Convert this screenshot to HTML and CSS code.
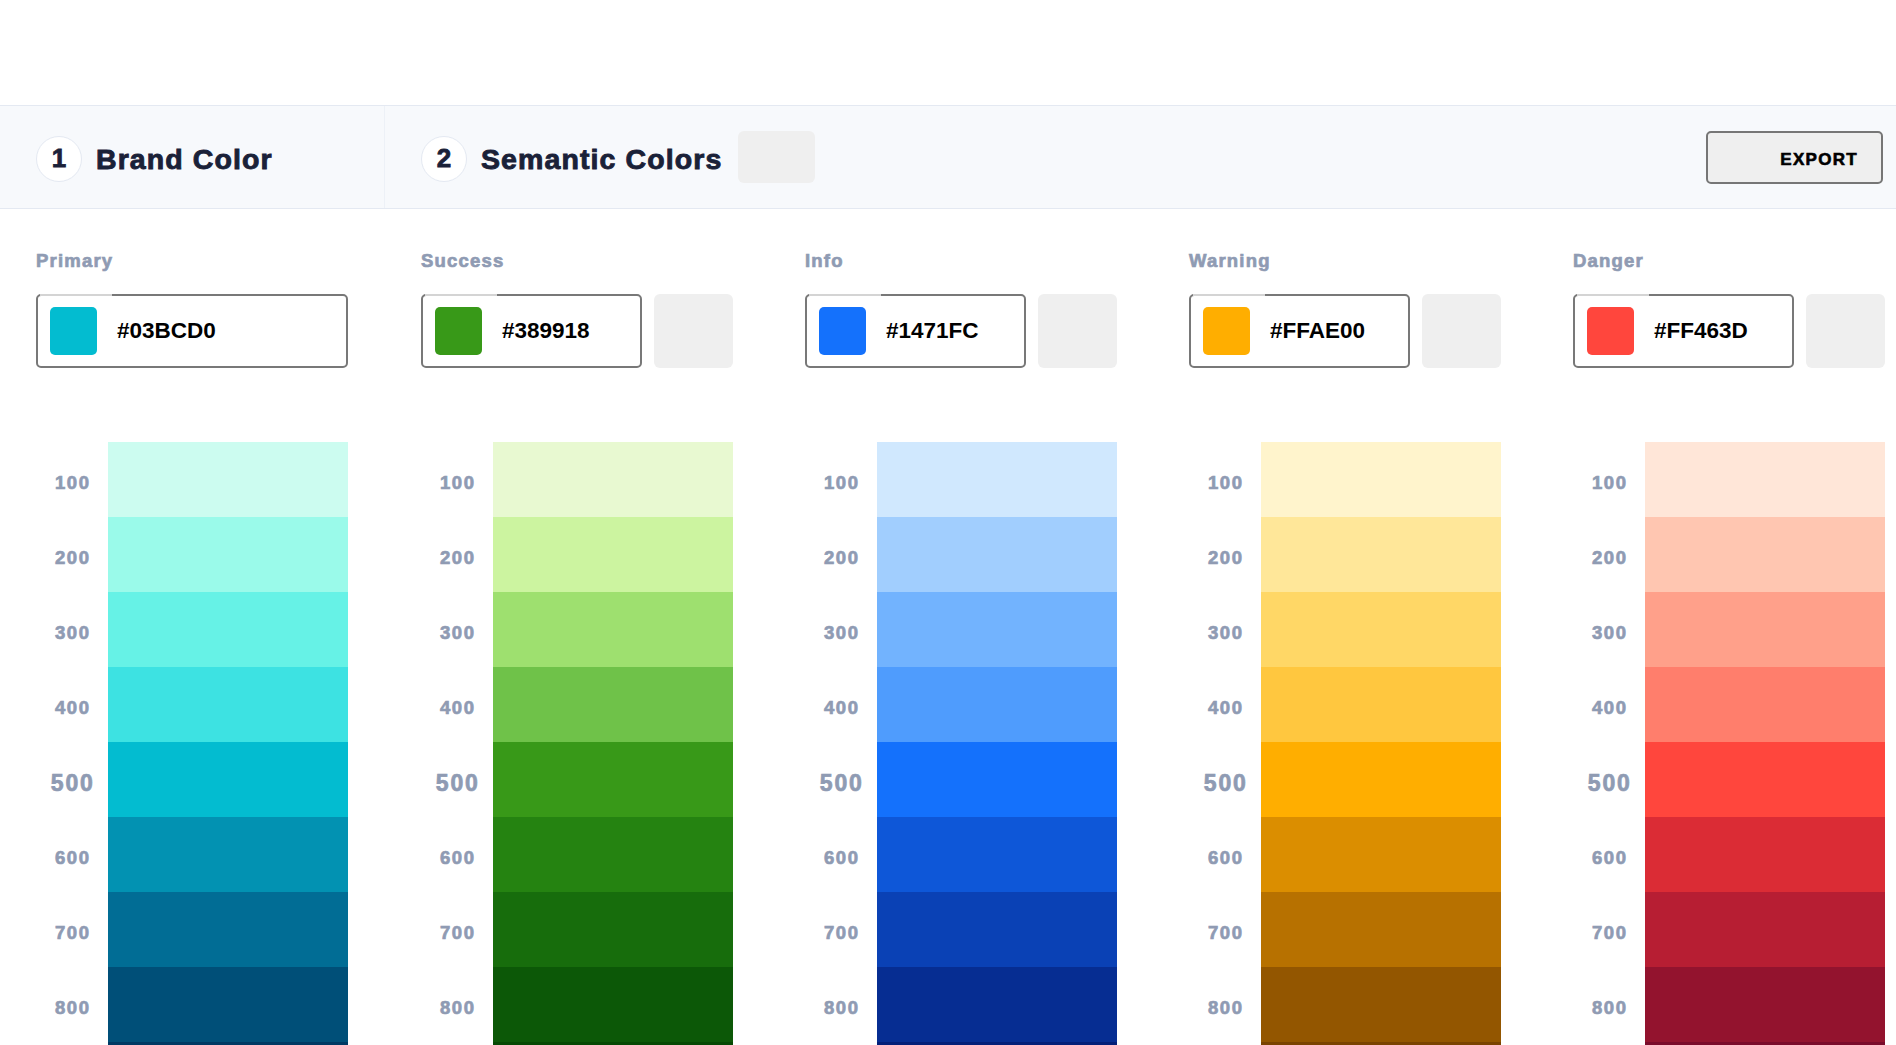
FILE: index.html
```html
<!DOCTYPE html>
<html lang="en">
<head>
<meta charset="utf-8">
<title>Eva Colors</title>
<link rel="stylesheet" href="styles.css">
</head>
<body>
<div class="page">
  <header class="steps">
    <div class="step step-brand">
      <span class="step-num">1</span>
      <h2 class="step-title">Brand Color</h2>
    </div>
    <div class="step step-semantic">
      <span class="step-num">2</span>
      <h2 class="step-title">Semantic Colors</h2>
      <button class="ghost ghost-head" type="button"></button>
      <span class="spacer"></span>
      <button class="export" type="button">EXPORT</button>
    </div>
  </header>

  <main class="palettes">
    <section class="col">
      <div class="col-label">Primary</div>
      <div class="field-row">
        <div class="hex-field"><span class="chip" style="background:#03BCD0"></span><span class="hex">#03BCD0</span></div>
      </div>
      <div class="scale">
        <div class="shade"><span class="shade-num">100</span><span class="shade-bar" style="background:#CCFCF0"></span></div>
        <div class="shade"><span class="shade-num">200</span><span class="shade-bar" style="background:#9AFAEA"></span></div>
        <div class="shade"><span class="shade-num">300</span><span class="shade-bar" style="background:#66F2E6"></span></div>
        <div class="shade"><span class="shade-num">400</span><span class="shade-bar" style="background:#3DE2E2"></span></div>
        <div class="shade"><span class="shade-num big">500</span><span class="shade-bar" style="background:#03BCD0"></span></div>
        <div class="shade"><span class="shade-num">600</span><span class="shade-bar" style="background:#0292B2"></span></div>
        <div class="shade"><span class="shade-num">700</span><span class="shade-bar" style="background:#016D95"></span></div>
        <div class="shade"><span class="shade-num">800</span><span class="shade-bar" style="background:#004F78"></span></div>
        <div class="shade"><span class="shade-num">900</span><span class="shade-bar" style="background:#003963"></span></div>
      </div>
    </section>

    <section class="col">
      <div class="col-label">Success</div>
      <div class="field-row">
        <div class="hex-field"><span class="chip" style="background:#389918"></span><span class="hex">#389918</span></div>
        <button class="ghost" type="button"></button>
      </div>
      <div class="scale">
        <div class="shade"><span class="shade-num">100</span><span class="shade-bar" style="background:#E8F9D1"></span></div>
        <div class="shade"><span class="shade-num">200</span><span class="shade-bar" style="background:#CCF4A0"></span></div>
        <div class="shade"><span class="shade-num">300</span><span class="shade-bar" style="background:#9EE06F"></span></div>
        <div class="shade"><span class="shade-num">400</span><span class="shade-bar" style="background:#6FC249"></span></div>
        <div class="shade"><span class="shade-num big">500</span><span class="shade-bar" style="background:#389918"></span></div>
        <div class="shade"><span class="shade-num">600</span><span class="shade-bar" style="background:#258311"></span></div>
        <div class="shade"><span class="shade-num">700</span><span class="shade-bar" style="background:#176D0C"></span></div>
        <div class="shade"><span class="shade-num">800</span><span class="shade-bar" style="background:#0C5807"></span></div>
        <div class="shade"><span class="shade-num">900</span><span class="shade-bar" style="background:#064904"></span></div>
      </div>
    </section>

    <section class="col">
      <div class="col-label">Info</div>
      <div class="field-row">
        <div class="hex-field"><span class="chip" style="background:#1471FC"></span><span class="hex">#1471FC</span></div>
        <button class="ghost" type="button"></button>
      </div>
      <div class="scale">
        <div class="shade"><span class="shade-num">100</span><span class="shade-bar" style="background:#D0E8FE"></span></div>
        <div class="shade"><span class="shade-num">200</span><span class="shade-bar" style="background:#A1CEFE"></span></div>
        <div class="shade"><span class="shade-num">300</span><span class="shade-bar" style="background:#72B3FE"></span></div>
        <div class="shade"><span class="shade-num">400</span><span class="shade-bar" style="background:#4F9CFD"></span></div>
        <div class="shade"><span class="shade-num big">500</span><span class="shade-bar" style="background:#1471FC"></span></div>
        <div class="shade"><span class="shade-num">600</span><span class="shade-bar" style="background:#0E57D8"></span></div>
        <div class="shade"><span class="shade-num">700</span><span class="shade-bar" style="background:#0A41B5"></span></div>
        <div class="shade"><span class="shade-num">800</span><span class="shade-bar" style="background:#062D92"></span></div>
        <div class="shade"><span class="shade-num">900</span><span class="shade-bar" style="background:#031F78"></span></div>
      </div>
    </section>

    <section class="col">
      <div class="col-label">Warning</div>
      <div class="field-row">
        <div class="hex-field"><span class="chip" style="background:#FFAE00"></span><span class="hex">#FFAE00</span></div>
        <button class="ghost" type="button"></button>
      </div>
      <div class="scale">
        <div class="shade"><span class="shade-num">100</span><span class="shade-bar" style="background:#FFF4CC"></span></div>
        <div class="shade"><span class="shade-num">200</span><span class="shade-bar" style="background:#FFE799"></span></div>
        <div class="shade"><span class="shade-num">300</span><span class="shade-bar" style="background:#FFD766"></span></div>
        <div class="shade"><span class="shade-num">400</span><span class="shade-bar" style="background:#FFC73F"></span></div>
        <div class="shade"><span class="shade-num big">500</span><span class="shade-bar" style="background:#FFAE00"></span></div>
        <div class="shade"><span class="shade-num">600</span><span class="shade-bar" style="background:#DB8E00"></span></div>
        <div class="shade"><span class="shade-num">700</span><span class="shade-bar" style="background:#B77100"></span></div>
        <div class="shade"><span class="shade-num">800</span><span class="shade-bar" style="background:#935600"></span></div>
        <div class="shade"><span class="shade-num">900</span><span class="shade-bar" style="background:#7A4300"></span></div>
      </div>
    </section>

    <section class="col">
      <div class="col-label">Danger</div>
      <div class="field-row">
        <div class="hex-field"><span class="chip" style="background:#FF463D"></span><span class="hex">#FF463D</span></div>
        <button class="ghost" type="button"></button>
      </div>
      <div class="scale">
        <div class="shade"><span class="shade-num">100</span><span class="shade-bar" style="background:#FFE6D8"></span></div>
        <div class="shade"><span class="shade-num">200</span><span class="shade-bar" style="background:#FFC6B1"></span></div>
        <div class="shade"><span class="shade-num">300</span><span class="shade-bar" style="background:#FFA08A"></span></div>
        <div class="shade"><span class="shade-num">400</span><span class="shade-bar" style="background:#FF7E6C"></span></div>
        <div class="shade"><span class="shade-num big">500</span><span class="shade-bar" style="background:#FF463D"></span></div>
        <div class="shade"><span class="shade-num">600</span><span class="shade-bar" style="background:#DB2C35"></span></div>
        <div class="shade"><span class="shade-num">700</span><span class="shade-bar" style="background:#B71E33"></span></div>
        <div class="shade"><span class="shade-num">800</span><span class="shade-bar" style="background:#93132E"></span></div>
        <div class="shade"><span class="shade-num">900</span><span class="shade-bar" style="background:#7A0B2B"></span></div>
      </div>
    </section>
  </main>
</div>
</body>
</html>
```

FILE: styles.css
```css
html, body {
  margin: 0;
  padding: 0;
  overflow: hidden;
  background: #ffffff;
}

body {
  font-family: "Liberation Sans", Arial, sans-serif;
  color: #222b45;
}

.page {
  width: 1920px;
  height: 1045px;
  padding-top: 105px;
  box-sizing: border-box;
  overflow: hidden;
}

/* ---------- steps header ---------- */
.steps {
  width: 1896px;
  display: flex;
  height: 102px;
  background: #f7f9fc;
  border-top: 1px solid #e4e9f2;
  border-bottom: 1px solid #e4e9f2;
}

.step {
  display: flex;
  align-items: center;
  padding-left: 36px;
  padding-top: 3px;
  box-sizing: border-box;
}

.step-brand {
  width: 385px;
  border-right: 1px solid #edf1f7;
}

.step-semantic {
  flex: 1;
  padding-right: 13px;
}

.step-num {
  width: 44px;
  height: 44px;
  border-radius: 50%;
  background: #ffffff;
  border: 1px solid #e4e9f2;
  display: flex;
  align-items: center;
  justify-content: center;
  font-size: 26px;
  font-weight: 700;
  -webkit-text-stroke: 0.8px #1a2138;
  color: #1a2138;
  flex: none;
}

.step-title {
  margin: 2px 0 0 14px;
  font-size: 28.5px;
  font-weight: 700;
  letter-spacing: 1.1px;
  -webkit-text-stroke: 0.9px #1a2138;
  color: #1a2138;
  line-height: 1;
}

.ghost {
  border: none;
  background: #efefef;
  border-radius: 6px;
  padding: 0;
  flex: none;
}

.ghost-head {
  width: 77px;
  height: 52px;
  margin-left: 16px;
  margin-top: -3px;
}

.spacer {
  flex: 1;
}

.export {
  width: 177px;
  height: 53px;
  margin-top: -3px;
  box-sizing: border-box;
  border: 2px solid #767676;
  border-radius: 5px;
  background: #efefef;
  font-family: "Liberation Sans", Arial, sans-serif;
  font-weight: 700;
  font-size: 17px;
  letter-spacing: 1.3px;
  -webkit-text-stroke: 0.6px #000000;
  color: #000000;
  text-align: right;
  padding: 5px 23px 0 0;
}

/* ---------- palette columns ---------- */
.palettes {
  display: grid;
  grid-template-columns: 385px repeat(4, 384px);
}

.col {
  padding: 40px 36px 0 36px;
}

.col:first-child {
  padding-right: 37px;
}

.col-label {
  height: 24px;
  line-height: 24px;
  font-size: 18.5px;
  font-weight: 700;
  letter-spacing: 1.2px;
  -webkit-text-stroke: 0.7px #8f9bb3;
  color: #8f9bb3;
  margin-bottom: 21px;
}

.field-row {
  display: flex;
  gap: 12px;
  height: 74px;
}

.field-row .ghost {
  width: 79px;
  height: 74px;
}

.hex-field {
  flex: 1;
  position: relative;
  display: flex;
  align-items: center;
  box-sizing: border-box;
  border: 2px solid #787878;
  border-radius: 5px;
  background: #ffffff;
  padding-left: 12px;
}

.hex-field::before {
  content: "";
  position: absolute;
  top: -2px;
  left: 2px;
  width: 72px;
  height: 2px;
  background: #d4d4d4;
}

.chip {
  width: 47px;
  height: 48px;
  border-radius: 5px;
  flex: none;
}

.hex {
  margin-left: 20px;
  font-family: "Liberation Sans", Arial, sans-serif;
  font-weight: 700;
  font-size: 22.5px;
  color: #000000;
}

.scale {
  margin-top: 74px;
}

.shade {
  display: grid;
  grid-template-columns: 72px 240px;
  height: 75px;
}

.shade-num {
  display: flex;
  align-items: center;
  justify-content: center;
  padding-top: 7px;
  font-size: 18.5px;
  font-weight: 700;
  letter-spacing: 1.5px;
  text-indent: 1.5px;
  -webkit-text-stroke: 0.7px #8f9bb3;
  color: #8f9bb3;
}

.shade-num.big {
  font-size: 23px;
  letter-spacing: 1.8px;
}

.shade-bar {
  display: block;
}
```
